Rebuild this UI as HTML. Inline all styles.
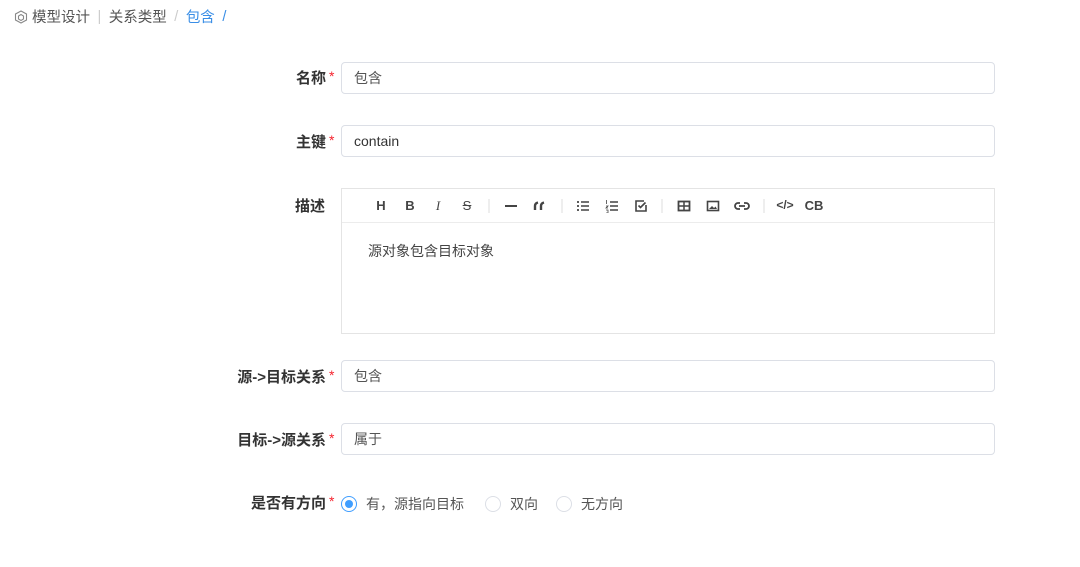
<!DOCTYPE html>
<html><head><meta charset="utf-8"><style>
*{margin:0;padding:0;box-sizing:border-box}
body{width:1080px;height:567px;background:#fff;font-family:"Liberation Sans","Noto Sans CJK SC",sans-serif;position:relative;overflow:hidden;color:#333}
.bc{position:absolute;left:14px;top:6px;font-size:14.5px;color:#555;display:flex;align-items:center;white-space:nowrap}
.bc .s{color:#ccc;margin:0 7.5px}
.bc .a{color:#3a8ee6}
.lbl{position:absolute;right:754px;font-size:15px;font-weight:bold;color:#333;white-space:nowrap}
.lbl i{color:#f5222d;font-style:normal;font-weight:normal;position:absolute;left:100%;margin-left:3px;top:1px;font-size:14px}
.inp{position:absolute;left:341px;width:654px;height:32px;border:1px solid #dcdfe6;border-radius:4px;font-size:14px;color:#555;padding-left:12px;line-height:30px}
.ed{position:absolute;left:341px;top:188px;width:654px;height:146px;border:1px solid #e4e4e4}
.tb{height:34px;border-bottom:1px solid #ececec;position:relative}
.tb span{position:absolute;top:9px;font-size:13px;font-weight:bold;color:#444;transform:translateX(-50%)}
.tb svg{position:absolute;top:10px;transform:translateX(-50%)}
.tb .sep{width:1px;height:14px;background:#ddd;top:10px}
.ct{position:absolute;left:26px;top:52px;font-size:14px;color:#444}
.rd{position:absolute;top:494px;display:flex;align-items:center;font-size:14px;color:#555}
.rd b{width:16px;height:16px;border:1px solid #dcdfe6;border-radius:50%;margin-right:9px;display:inline-block;position:relative}
.rd b.on{border-color:#409eff}
.rd b.on:after{content:"";position:absolute;left:3px;top:3px;width:8px;height:8px;border-radius:50%;background:#409eff}
</style></head><body>
<div class="bc"><svg width="14" height="14" viewBox="0 0 14 14" style="margin-right:4px"><path d="M7 1L12.5 4v6L7 13 1.5 10V4z M7 4.5L9.5 6v3L7 10.5 4.5 9V6z" fill="none" stroke="#888" stroke-width="1.1"/></svg>模型设计<span class="s">|</span>关系类型<span class="s">/</span><span class="a">包含</span><span class="s" style="color:#3a8ee6">/</span></div>

<div class="lbl" style="top:67px">名称<i>*</i></div>
<div class="inp" style="top:62px">包含</div>
<div class="lbl" style="top:131px">主键<i>*</i></div>
<div class="inp" style="top:125px;color:#333">contain</div>
<div class="lbl" style="top:195px;right:755px">描述</div>
<div class="ed"><div class="tb">
<span style="left:39px">H</span><span style="left:68px">B</span><span style="left:96px;font-style:italic;font-family:'Liberation Serif',serif;font-weight:normal">I</span><span style="left:125px;text-decoration:line-through;font-weight:normal">S</span>
<span class="sep" style="left:147px"></span>
<svg style="left:169px" width="14" height="14" viewBox="0 0 14 14"><rect x="1" y="6" width="12" height="2" fill="#444"/></svg>
<svg style="left:198px" width="14" height="14" viewBox="0 0 14 14"><path d="M2 11V7c0-2 1-3 3-3.5M8 11V7c0-2 1-3 3-3.5" stroke="#444" stroke-width="2.4" fill="none"/></svg>
<span class="sep" style="left:220px"></span>
<svg style="left:241px" width="14" height="14" viewBox="0 0 14 14"><path d="M5 3h8M5 7h8M5 11h8" stroke="#444" stroke-width="1.6"/><path d="M1 3h2M1 7h2M1 11h2" stroke="#444" stroke-width="1.8"/></svg>
<svg style="left:270px" width="14" height="14" viewBox="0 0 14 14"><path d="M5 3h8M5 7h8M5 11h8" stroke="#444" stroke-width="1.6"/><path d="M1.5 1v4M1 7h2l-2 2h2M1 11h2v3H1" stroke="#444" stroke-width="0.8" fill="none"/></svg>
<svg style="left:299px" width="14" height="14" viewBox="0 0 14 14"><path d="M12 6v6H2V2h8" stroke="#444" stroke-width="1.6" fill="none"/><path d="M4.5 6.5l2 2 5-5" stroke="#444" stroke-width="1.6" fill="none"/></svg>
<span class="sep" style="left:320px"></span>
<svg style="left:342px" width="14" height="14" viewBox="0 0 14 14"><rect x="1.5" y="2.5" width="11" height="9" stroke="#444" stroke-width="1.8" fill="none"/><path d="M1.5 7h11M7 2.5v9" stroke="#444" stroke-width="1.5"/></svg>
<svg style="left:371px" width="14" height="14" viewBox="0 0 14 14"><rect x="1.5" y="2.5" width="11" height="9" stroke="#444" stroke-width="1.6" fill="none"/><path d="M3 10l3-3 2 2 1.5-1.5L11 10z" fill="#444"/></svg>
<svg style="left:400px" width="16" height="14" viewBox="0 0 16 14"><path d="M6 4H4a3 3 0 0 0 0 6h2M10 4h2a3 3 0 0 1 0 6h-2M5 7h6" stroke="#444" stroke-width="1.8" fill="none"/></svg>
<span class="sep" style="left:422px"></span><span style="left:443px;font-size:12px">&lt;/&gt;</span><span style="left:472px">CB</span>
</div><div class="ct">源对象包含目标对象</div></div>
<div class="lbl" style="top:366px">源-&gt;目标关系<i>*</i></div>
<div class="inp" style="top:360px">包含</div>
<div class="lbl" style="top:429px">目标-&gt;源关系<i>*</i></div>
<div class="inp" style="top:423px">属于</div>
<div class="lbl" style="top:492px">是否有方向<i>*</i></div>
<div class="rd" style="left:341px"><b class="on"></b>有，源指向目标</div>
<div class="rd" style="left:485px"><b></b>双向</div>
<div class="rd" style="left:556px"><b></b>无方向</div>
</body></html>
